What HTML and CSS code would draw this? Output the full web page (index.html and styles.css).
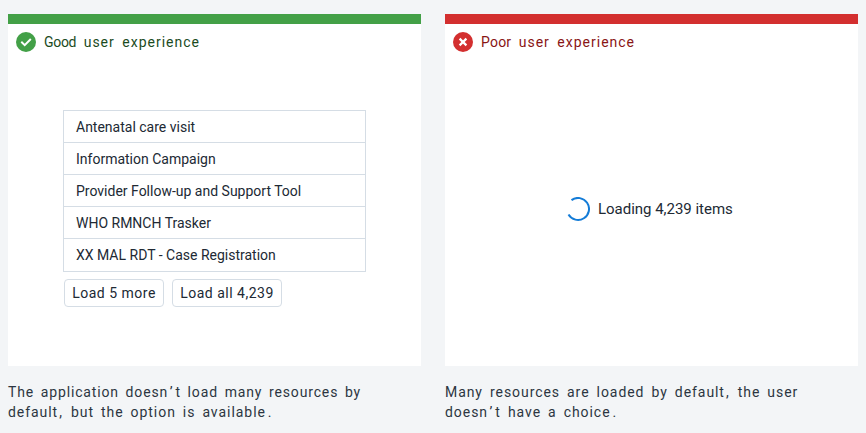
FILE: index.html
```html
<!DOCTYPE html>
<html lang="en">
<head>
<meta charset="utf-8">
<title>User experience</title>
<link rel="stylesheet" href="styles.css">
</head>
<body>
<main class="comparison">
  <figure class="example good">
    <div class="card">
      <div class="heading">
        <svg class="status" viewBox="0 0 20 20"><circle cx="10" cy="10" r="10" fill="#43a047"/><path d="M5.3 9.8 8.7 13.1 14.8 7" fill="none" stroke="#fff" stroke-width="2"/></svg>
        <span class="label"><span class="rating">Good</span> user experience</span>
      </div>
      <div class="resources">
        <ul class="list">
          <li>Antenatal care visit</li>
          <li>Information Campaign</li>
          <li>Provider Follow-up and Support Tool</li>
          <li>WHO RMNCH Trasker</li>
          <li>XX MAL RDT - Case Registration</li>
        </ul>
        <div class="actions">
          <button class="button more">Load 5 more</button>
          <button class="button all">Load all 4,239</button>
        </div>
      </div>
    </div>
    <figcaption><span class="dense">The application doesn<span class="mark">’</span>t load many resources by</span><br><span class="wide">default<span class="comma">,</span> but the option is available<span class="stop">.</span></span></figcaption>
  </figure>
  <figure class="example poor">
    <div class="card">
      <div class="heading">
        <svg class="status" viewBox="0 0 20 20"><circle cx="10" cy="10" r="10" fill="#d32f2f"/><path d="M6.6 6.6l6.8 6.8M13.4 6.6l-6.8 6.8" fill="none" stroke="#fff" stroke-width="2.2"/></svg>
        <span class="label"><span class="rating">Poor</span> user experience</span>
      </div>
      <div class="loading">
        <svg class="spinner" viewBox="0 0 24 24"><path d="M5.5 3.1A11 11 0 1 1 2.5 17.5" fill="none" stroke="#147cd7" stroke-width="2"/></svg>
        <span>Loading 4,239 items</span>
      </div>
    </div>
    <figcaption>Many resources are loaded by default<span class="comma">,</span> the user<br><span class="wide">doesn<span class="mark">’</span>t have a choice<span class="stop">.</span></span></figcaption>
  </figure>
</main>
</body>
</html>
```
FILE: styles.css
```css
* { box-sizing: border-box; }
body { margin: 0; background: #f3f5f7; color: #212934; font-family: Roboto, sans-serif; }
.comparison { display: grid; grid-template-columns: 413px 413px; gap: 24px; padding: 14px 8px 0; }
.example { margin: 0; }
.card { height: 352px; background: #fff; border-top: 10px solid #43a047; }
.poor .card { border-color: #d32f2f; }
.heading { display: flex; align-items: center; gap: 8px; height: 36px; padding-left: 8px; font: 14px Roboto, sans-serif; letter-spacing: 1px; word-spacing: 3px; color: #1b4b1e; }
.poor .heading { color: #891515; }
.good .rating { letter-spacing: -.3px; }
.poor .rating { letter-spacing: .2px; }
.status { width: 20px; height: 20px; }
.resources { width: 303px; margin: 50px 0 0 55px; }
.list { list-style: none; margin: 0; padding: 0; border: 1px solid #d5dde5; }
.list li { height: 32px; padding-left: 12px; font-size: 14px; line-height: 33px; border-bottom: 1px solid #d5dde5; }
.list li:last-child { border-bottom: 0; }
.actions { display: flex; gap: 8px; padding: 7px 1px 0; }
.button { height: 28px; padding: 0; border: 1px solid #d5dde5; border-radius: 4px; background: #fff; color: #212934; font: 14px Roboto, sans-serif; letter-spacing: .5px; white-space: nowrap; }
.more { width: 100px; }
.all { width: 110px; }
.loading { display: flex; align-items: center; gap: 8px; height: 24px; margin: 137px 0 0 121px; font-size: 15px; letter-spacing: -.02px; }
.spinner { width: 24px; height: 24px; }
figcaption { margin-top: 16px; font: 14px/20px Roboto, sans-serif; letter-spacing: .93px; word-spacing: 2.7px; color: #2c3541; white-space: nowrap; }
.dense { letter-spacing: .85px; word-spacing: 2.4px; }
.wide { letter-spacing: .95px; word-spacing: 2.6px; }
.mark { margin-left: 1.5px; letter-spacing: 3px; }
.comma { margin-left: 1px; letter-spacing: 2px; }
.stop { margin-left: 2px; }
```
